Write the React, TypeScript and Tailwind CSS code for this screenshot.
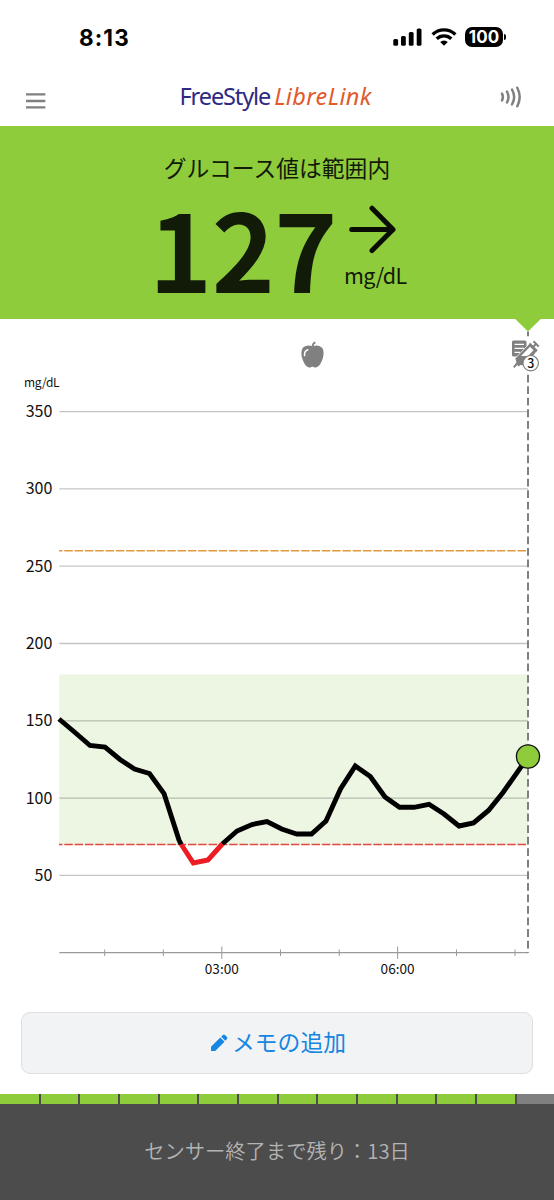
const UNIT = 1.546;
const BASE = 952.7;
const yOf = (value: number) => BASE - value * UNIT;

const levels = [350, 300, 250, 200, 150, 100, 50];
const minorTicks = [104.7, 163.3, 280.5, 339.2, 456.5, 515];
const majorTicks = [
  { x: 221.8, label: "03:00" },
  { x: 397.6, label: "06:00" },
];

const beforeLow = "59,719 75,732.5 90,745.5 105,747 120,759.5 134.5,769 149.5,773.5 164,793.5 179,840 181.3,844.5";
const low = "181.3,844.5 193.3,863 208,860 222.3,844";
const afterLow =
  "222.3,844 237,831 252,824.5 267,821.5 281.7,829 296.7,834 311.5,834 326,821 340.5,789 355.3,766 370.3,776.5 385,797 399.5,807.3 414,807.3 429,804.3 444,814 459,826 473.5,823 488.5,810.5 503,792.5 528,757";

function StatusBar() {
  return (
    <div className="flex h-[74px] items-center justify-between pl-[79px] pr-[48px] text-black">
      <span className="mt-[2px] font-['Inter',sans-serif] text-[22.5px] font-bold leading-none tracking-[1.1px]">8:13</span>
      <div className="flex items-center">
        <svg width="29" height="18" viewBox="0 0 29 18">
          <rect x="0.3" y="11" width="4.8" height="6.8" rx="1.5" />
          <rect x="8" y="8" width="4.8" height="9.8" rx="1.5" />
          <rect x="15.8" y="4" width="4.8" height="13.8" rx="1.5" />
          <rect x="23.7" y="0.4" width="4.8" height="17.4" rx="1.5" />
        </svg>
        <svg className="ml-[9px]" width="26" height="18" viewBox="0 0 26 18" fill="none" stroke="#000" strokeWidth="3.3">
          <path d="M1.6 6.5a16.2 16.2 0 0 1 22.8 0" />
          <path d="M5.7 10.8a10.4 10.4 0 0 1 14.6 0" />
          <path d="M13 17.8l-3.8-3.9a5.5 5.5 0 0 1 7.6 0z" fill="#000" stroke="none" />
        </svg>
        <div className="ml-2 flex h-5 w-[38px] items-center justify-center rounded-[7px] bg-black font-['Inter',sans-serif] text-[17px] font-bold leading-none text-white">
          100
        </div>
        <div className="ml-px h-[6px] w-[2px] rounded-r-full bg-black" />
      </div>
    </div>
  );
}

function Header() {
  return (
    <header className="flex h-[52px] justify-between pl-[26px] pr-[32px]">
      <svg className="mt-[18px]" width="20" height="18" viewBox="0 0 20 18" stroke="#808080" strokeWidth="2.4">
        <path d="M0 2.4h19.3M0 9h19.3M0 15.4h19.3" />
      </svg>
      <div className="mt-[7px] flex h-8 w-[195px] items-center gap-[4px] whitespace-nowrap pl-[4px] font-['Noto_Sans',sans-serif] text-[23.5px] leading-none">
        <span className="tracking-[-1.1px] text-[#2e2a82]">FreeStyle</span>
        <span className="italic tracking-[0.4px] text-[#e25a2b]">LibreLink</span>
      </div>
      <svg className="mt-3" width="22" height="22" viewBox="0 0 22 22" fill="none" stroke="#808080" strokeWidth="2.5" strokeLinecap="round">
        <path d="M2 7.5q1.8 3.5 0 7" />
        <path d="M7 5.5q3 5.5 0 11" />
        <path d="M12 3.5q4.3 7.5 0 15" />
        <path d="M17.3 1.7q4.8 9.3 0 18.6" />
      </svg>
    </header>
  );
}

function Reading() {
  return (
    <section className="h-[193px] bg-[#8fcc3c] text-[#121a08]">
      <h1 className="pt-[26px] text-center text-[22.8px] leading-8">グルコース値は範囲内</h1>
      <div className="flex pl-[149px]">
        <span className="mt-[23px] block h-[80px] w-[192px] text-[107px] font-bold leading-[80px] tracking-[-0.5px]">127</span>
        <div className="ml-[3px]">
          <svg className="ml-[5px] mt-[21px]" width="48" height="50" viewBox="0 0 48 50" fill="none" stroke="#080c04" strokeWidth="5" strokeLinecap="round" strokeLinejoin="round">
            <path d="M2.7 24.5H44M23 3.2L44 24.5L23 45.5" />
          </svg>
          <div className="mt-[4px] text-[21.5px] leading-8 tracking-[-0.7px]">mg/dL</div>
        </div>
      </div>
    </section>
  );
}

function GlucoseChart() {
  return (
    <svg className="block" width="554" height="671" viewBox="0 319 554 671" fill="none">
      <rect x="59.3" y={yOf(180)} width="468.7" height={yOf(70) - yOf(180)} fill="#ecf6e3" />
      {levels.map((level) => (
        <g key={level}>
          <line x1="59.3" x2="528" y1={yOf(level)} y2={yOf(level)} stroke="#000" strokeOpacity="0.23" strokeWidth="1.3" />
          <text x="52.3" y={yOf(level) + 5.5} textAnchor="end" fontSize="16" fill="#111">
            {level}
          </text>
        </g>
      ))}
      <text x="24" y="387" fontSize="12" letterSpacing="-0.3" fill="#111">mg/dL</text>

      <path d={`M59 ${yOf(260)}H528`} stroke="#e09a3e" strokeWidth="1.5" strokeDasharray="8.5 1.8" strokeDashoffset="5" />
      <path d={`M59 ${yOf(70)}H528`} stroke="#e04a40" strokeWidth="1.5" strokeDasharray="8.5 1.8" strokeDashoffset="5" />

      {/* time axis */}
      <path d={`M59.3 ${BASE}H528`} stroke="#999" strokeWidth="1.2" />
      {minorTicks.map((x) => (
        <path key={x} d={`M${x} 949.5v6.5`} stroke="#999" />
      ))}
      {majorTicks.map(({ x, label }) => (
        <g key={label}>
          <path d={`M${x} 946.5v12.5`} stroke="#999" />
          <text x={x} y="973.5" textAnchor="middle" fontSize="13.6" fill="#111">{label}</text>
        </g>
      ))}

      <path d="M515 318.8h26l-13 12.7z" fill="#8fcc3c" />
      <path d="M528 331.5V953" stroke="#808080" strokeWidth="2" strokeDasharray="7.8 3.75" strokeDashoffset="3" />

      <g strokeWidth="4.9" strokeLinejoin="miter">
        <polyline points={beforeLow} stroke="#000" />
        <polyline points={afterLow} stroke="#000" />
        <polyline points={low} stroke="#ed1c24" />
      </g>
      <circle cx="528" cy="756.5" r="11.6" fill="#8fcc3c" stroke="#111" strokeWidth="1.3" />

      {/* meal */}
      <path
        d="M312.5 346.3c-3-1.4-7-1.2-9.3 1.3-2.3 2.6-2.2 7.4-.7 11.6 1.5 4.2 4 8.3 7 8.3 1.3 0 1.7-.8 3-.8s1.7.8 3 .8c3 0 5.500-4.100 7-8.300 1.500-4.200 1.600-9-.7-11.600-2.300-2.500-6.300-2.700-9.300-1.300z"
        fill="#808080"
      />
      <path d="M312.7 346.4q-.2-2.900 2.600-4" stroke="#808080" strokeWidth="1.7" />
      <path d="M304.6 355.6q-.5-4.700 3.200-5.800" stroke="#fff" strokeWidth="1.5" strokeLinecap="round" />

      {/* note + insulin */}
      <rect x="511" y="339" width="29" height="33" fill="#fff" />
      <path d="M513.5 340.5h11.500q1.500 0 1.500 1.500v8l-7 6.500h-6q-1.500 0-1.500-1.500v-13q0-1.500 1.500-1.500z" fill="#808080" />
      <path d="M514.5 344.3h9.500M514.500 348.300h9.500M514.500 352.300h5.500" stroke="#fff" strokeWidth="1.3" />
      <path d="M515 358.5L530 343l7.500 7.500L526 365.500l-6 0-1.500 1.500-2-2.500-3.500 2.800 3-5z" fill="#808080" stroke="#fff" strokeWidth="0.8" />
      <path d="M521 356L530 346.800l3.500 3.500-5.500 5.700z" fill="#fff" />
      <path d="M513.8 367.300l3.500-4M529.500 343.500l7.500 7.500M532.500 347.500l4-4M533.500 341.300l5.300 5.300" stroke="#808080" strokeWidth="2" />
      <circle cx="530.7" cy="363.200" r="7.700" fill="#fff" stroke="#808080" strokeWidth="1.2" />
      <text x="530.7" y="367.700" textAnchor="middle" fontSize="12.5" fontWeight="500" fill="#111">3</text>
    </svg>
  );
}

function AddNote() {
  return (
    <button className="mx-[21px] mt-[22px] flex h-[62px] items-center justify-center rounded-[9px] border-[1.5px] border-[#dedfe2] bg-[#f2f3f5] text-[22.8px] leading-none text-[#1587e2]">
      <svg className="ml-[2px] mr-[4px]" width="18" height="18" viewBox="0 0 18 18" fill="#1587e2">
        <path d="M1 17v-4.200L10.300 3.500l4.200 4.200L5.200 17z" />
        <path d="M11.200 2.700L12.900 1q1-.8 2 0l2.100 2.100q.8 1 0 1.900l-1.700 1.800z" />
      </svg>
      <span className="-mt-[2px]">メモの追加</span>
    </button>
  );
}

function SensorFooter() {
  return (
    <footer className="mt-5 flex-1 bg-[#4c4c4c]">
      <div className="flex h-[10px] gap-[2px]">
        {Array.from({ length: 13 }, (_, i) => (
          <div key={i} className={i === 0 ? "w-[38.5px] bg-[#8fcc3c]" : "w-[37.7px] bg-[#8fcc3c]"} />
        ))}
        <div className="flex-1 bg-[#808080]" />
      </div>
      <p className="mt-[28px] text-center text-[20.3px] font-[350] leading-9 text-[#b4b4b4]">センサー終了まで残り：13日</p>
    </footer>
  );
}

export default function App() {
  return (
    <main lang="ja" className="flex h-[1200px] w-[554px] flex-col overflow-hidden bg-white font-['Noto_Sans_CJK_JP',sans-serif]">
      <StatusBar />
      <Header />
      <Reading />
      <GlucoseChart />
      <AddNote />
      <SensorFooter />
    </main>
  );
}
